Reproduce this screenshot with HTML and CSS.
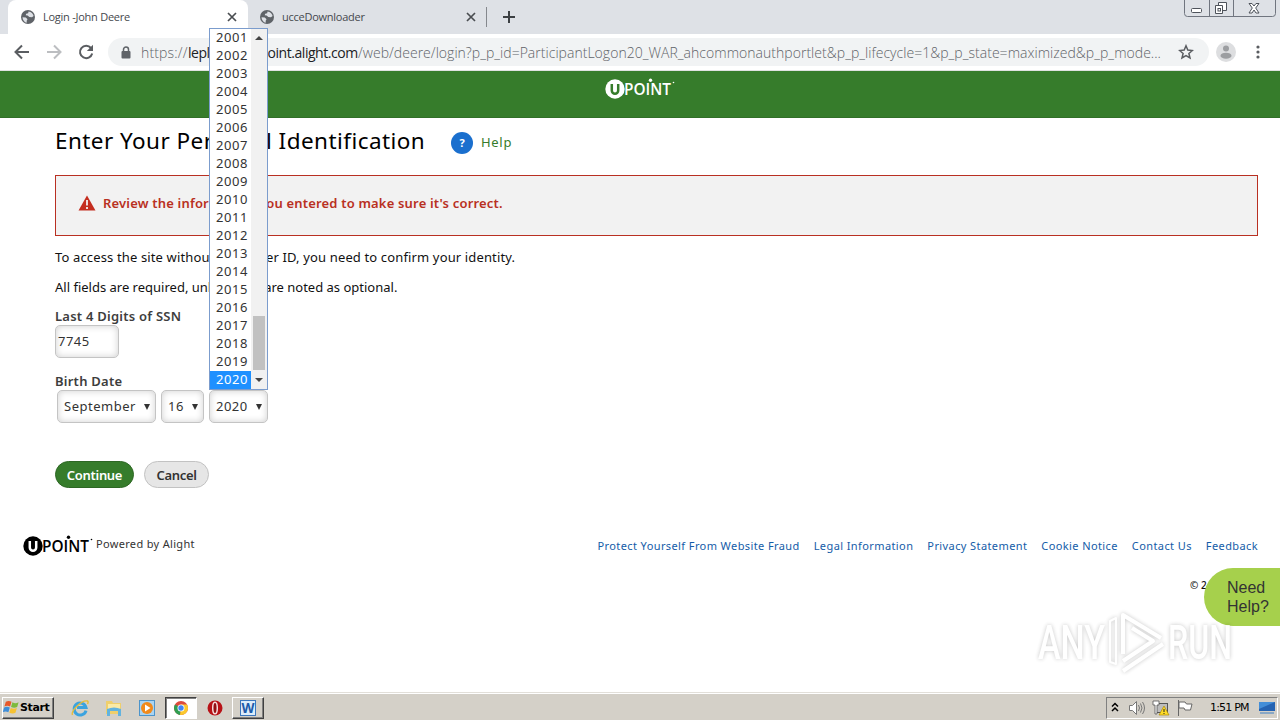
FILE: index.html
```
<!DOCTYPE html>
<html lang="en">
<head>
    <meta charset="UTF-8">
    <meta name="viewport" content="width=device-width, initial-scale=1.0">
    <title>Login -John Deere</title>
    <link rel="stylesheet" href="styles.css">
</head>
<body>

<svg class="defs" width="0" height="0">
    <symbol id="globe" viewBox="0 0 16 16">
        <circle cx="8" cy="8" r="7" fill="#5f6368"/>
        <path d="M2.500 8.200l3.300.3 1.700 1.700-.8 1.500v2.100C4.300 13.300 2.600 10.800 2.500 8.200zM8.500 2.500c2.800.2 4.700 2.200 5.100 4.600l-1.600 1.200-2.700-.4-1.700-1.300-1.900-.3.500-1.500 2-.5z" fill="#dee1e6"/>
    </symbol>
    <symbol id="close" viewBox="0 0 10 10">
        <path d="M1 1l8 8M9 1L1 9" stroke="#4a4d51" stroke-width="1.700"/>
    </symbol>
    <symbol id="upoint" viewBox="0 0 70 22">
        <circle cx="10" cy="11" r="9.700" fill="currentColor"/>
        <path class="upoint-u" d="M6.800 6v6.500a3.200 3.200 0 0 0 6.400 0V6" fill="none" stroke-width="2.500"/>
        <text x="19" y="16.500" font-size="16.500" font-weight="600" textLength="47" lengthAdjust="spacingAndGlyphs" fill="currentColor">POINT</text>
        <circle cx="45.500" cy="2.300" r="1.700" fill="currentColor"/>
        <circle cx="68.500" cy="4.500" r=".8" fill="currentColor"/>
    </symbol>
</svg>

<div class="tabs">
    <div class="tab active">
        <svg class="globe"><use href="#globe"/></svg>
        <span class="tab-title">Login -John Deere</span>
        <svg class="close"><use href="#close"/></svg>
    </div>
    <div class="tab">
        <svg class="globe"><use href="#globe"/></svg>
        <span class="tab-title">ucceDownloader</span>
        <svg class="close"><use href="#close"/></svg>
    </div>
    <svg class="plus" viewBox="0 0 12 12"><path d="M6 0v12M0 6h12" stroke="#3c4043" stroke-width="2"/></svg>
    <svg class="window-btns" viewBox="0 0 94 18" fill="none" stroke="#70757f">
        <path d="M1.500 0v13.500a3 3 0 0 0 3 3h85a3 3 0 0 0 3-3V0M26.500 0v16M50.500 0v16"/>
        <rect x="8.500" y="8.500" width="10" height="4" rx="1" fill="#fff" stroke="#4e535b"/>
        <path d="M35.500 2.500h8v8h-8z" fill="#fff" stroke="#4e535b"/>
        <path d="M32.500 5.500h7v8h-7z" fill="#fff" stroke="#4e535b"/>
        <rect x="35" y="8.500" width="2.500" height="2.500" stroke="#4e535b"/>
        <path d="M66 3.500h3l2 2.500 2-2.500h3l-3.300 4.500 3.300 5h-3l-2-3-2 3h-3l3.300-5z" fill="#fff" stroke="#4e535b"/>
    </svg>
</div>

<div class="toolbar">
    <svg class="nav-icon" viewBox="0 0 16 16"><path d="M15 8H2M8 1.500L1.500 8 8 14.500" fill="none" stroke="#5a5d61" stroke-width="2"/></svg>
    <svg class="nav-icon" viewBox="0 0 16 16"><path d="M1 8h13M8 1.500L14.500 8 8 14.500" fill="none" stroke="#bcbec1" stroke-width="2"/></svg>
    <svg class="nav-icon" viewBox="0 0 16 16"><path d="M13 4a6.200 6.200 0 1 0 1.200 5.500" fill="none" stroke="#5a5d61" stroke-width="2"/><path d="M15 .8v6.200H8.800z" fill="#5a5d61"/></svg>
    <div class="omnibox">
        <svg class="lock" viewBox="0 0 10 13"><path d="M2.500 6V3.500a2.500 2.500 0 0 1 5 0V6" fill="none" stroke="#5f6368" stroke-width="1.500"/><rect x="0.500" y="5" width="9" height="7.500" rx="1" fill="#5f6368"/></svg>
        <div class="url"><span class="url-scheme">https://</span><span class="url-host">leplb0950.upoint.alight.com</span><span class="url-path">/web/deere/login?p_p_id=ParticipantLogon20_WAR_ahcommonauthportlet&amp;p_p_lifecycle=1&amp;p_p_state=maximized&amp;p_p_mode...</span></div>
        <svg class="star" viewBox="0 0 16 16"><path d="M8 1.800l1.800 4.300 4.600.4-3.500 3 1.100 4.500L8 11.600 4 14l1.100-4.500-3.500-3 4.600-.4z" fill="none" stroke="#5a5d61" stroke-width="1.500"/></svg>
    </div>
    <svg class="avatar" viewBox="0 0 20 20"><circle cx="10" cy="10" r="10" fill="#dddee0"/><circle cx="10" cy="6.500" r="3" fill="#9c9ea1"/><ellipse cx="10" cy="13.700" rx="5.500" ry="3" fill="#9c9ea1"/></svg>
    <svg class="dots" viewBox="0 0 4 14" fill="#5a5d61"><circle cx="2" cy="2" r="1.600"/><circle cx="2" cy="7" r="1.600"/><circle cx="2" cy="12" r="1.600"/></svg>
</div>

<main class="page">
    <header class="banner">
        <svg class="upoint-logo light"><use href="#upoint"/></svg>
    </header>

    <div class="content">
        <div class="title-row">
            <h1>Enter Your Personal Identification</h1>
            <span class="help-icon">?</span>
            <a class="help-link">Help</a>
        </div>
        <div class="alert">
            <svg class="warning" viewBox="0 0 18 16"><path d="M9 0.500L17.500 15.500H.5z" fill="#c42e20"/><path d="M9 5v5.500M9 12v2" stroke="#f2f2f2" stroke-width="1.800"/></svg>
            <span class="alert-text">Review the information you entered to make sure it's correct.</span>
        </div>
        <p class="intro">To access the site without your User ID, you need to confirm your identity.</p>
        <p class="required">All fields are required, unless they are noted as optional.</p>

        <label class="ssn-label">Last 4 Digits of SSN</label>
        <div class="field ssn">7745</div>

        <label class="birth-label">Birth Date</label>
        <div class="selects">
            <div class="field month">September<i class="arrow"></i></div>
            <div class="field day">16<i class="arrow"></i></div>
            <div class="field year">2020<i class="arrow"></i></div>
        </div>

        <div class="buttons">
            <button class="btn continue">Continue</button>
            <button class="btn cancel">Cancel</button>
        </div>
    </div>

    <footer class="footer">
        <svg class="upoint-logo dark"><use href="#upoint"/></svg>
        <span class="powered">Powered by Alight</span>
        <nav>
            <a>Protect Yourself From Website Fraud</a>
            <a>Legal Information</a>
            <a>Privacy Statement</a>
            <a>Cookie Notice</a>
            <a>Contact Us</a>
            <a>Feedback</a>
        </nav>
    </footer>
    <div class="copyright">© 2</div>
</main>

<div class="need-help">Need<br>Help?</div>

<svg class="watermark" viewBox="0 0 210 80">
    <g fill="#fff" font-size="48" font-weight="500">
        <text x="8" y="55" textLength="67" lengthAdjust="spacingAndGlyphs">ANY</text>
        <text x="138" y="55" textLength="64" lengthAdjust="spacingAndGlyphs">RUN</text>
    </g>
    <g fill="none" stroke="#fff" stroke-width="4" stroke-linejoin="round">
        <path d="M80 58V17l6-3v46z" stroke-width="2"/>
        <path d="M93 50V11l38 23M133 40L93 67M93 57l30-20-21-13"/>
    </g>
</svg>

<div class="dropdown">
    <ul class="years">
        <li>2001</li>
        <li>2002</li>
        <li>2003</li>
        <li>2004</li>
        <li>2005</li>
        <li>2006</li>
        <li>2007</li>
        <li>2008</li>
        <li>2009</li>
        <li>2010</li>
        <li>2011</li>
        <li>2012</li>
        <li>2013</li>
        <li>2014</li>
        <li>2015</li>
        <li>2016</li>
        <li>2017</li>
        <li>2018</li>
        <li>2019</li>
        <li class="selected">2020</li>
    </ul>
    <div class="scrollbar">
        <i class="scroll-up"></i>
        <div class="thumb"></div>
        <i class="scroll-down"></i>
    </div>
</div>

<div class="taskbar">
    <div class="start">
        <svg viewBox="0 0 18 18"><path d="M3 3q3-2 6 0L7.500 8Q4.500 6.500 1.500 8z" fill="#e8582a"/><path d="M10 3.500q3 2 6.500 0L15 8.500q-3 1.500-6.500 0z" fill="#7dba3c"/><path d="M1.200 9q3-1.500 6 0l-1.500 5q-3-1.700-6 0z" fill="#3f8ed8"/><path d="M8.200 9.500q3 1.500 6.500 0l-1.500 5q-3 1.700-6.500 0z" fill="#f6c232"/></svg>
        <span>Start</span>
    </div>
    <div class="task">
        <svg viewBox="0 0 18 18"><path d="M15 11.500A6 6 0 1 1 15 8.500H6" fill="none" stroke="#3ba3df" stroke-width="3"/><path d="M1.500 16C-.5 12 11 .5 16.500 2c1 .5.500 2 0 3" fill="none" stroke="#e6bd3a" stroke-width="1.400"/></svg>
    </div>
    <div class="task">
        <svg viewBox="0 0 18 18"><path d="M1 2h6l1 2h8v11H1z" fill="#efcf6c"/><path d="M3 5h12v7H3z" fill="#fbeaa6"/><path d="M2 10q7-3 14 0v7h-3v-5H5v5H2z" fill="#62b3df"/></svg>
    </div>
    <div class="task">
        <svg viewBox="0 0 18 18"><rect x="1.500" y="1.500" width="15" height="15" fill="#a9d4f2" stroke="#4c94cb"/><circle cx="9" cy="9" r="6" fill="#f18a1b"/><path d="M7 5.500l5.500 3.500L7 12.500z" fill="#fff"/></svg>
    </div>
    <div class="task pressed">
        <svg viewBox="0 0 18 18"><circle cx="9" cy="9" r="7" fill="#dd4b3e"/><path d="M9 9L3 5.500A7 7 0 0 0 8 16z" fill="#2f9e51"/><path d="M9 9h7a7 7 0 0 1-8 7z" fill="#fbc92d"/><path d="M9 5.500h6a7 7 0 0 1 1 4L12 10z" fill="#fbc92d"/><circle cx="9" cy="9" r="3.500" fill="#fff"/><circle cx="9" cy="9" r="2.700" fill="#4285f4"/></svg>
    </div>
    <div class="task">
        <svg viewBox="0 0 18 18"><circle cx="9" cy="9" r="7.500" fill="#b81217"/><ellipse cx="9" cy="9" rx="2.300" ry="5.800" fill="#941013" stroke="#f7dede" stroke-width="1.500"/></svg>
    </div>
    <div class="task raised">
        <svg viewBox="0 0 18 18"><rect x="1.500" y="1.500" width="15" height="15" fill="#dcecfa" stroke="#3c77bd"/><text x="2.500" y="14" font-size="14" font-weight="bold" fill="#1e5baa" textLength="13" lengthAdjust="spacingAndGlyphs">W</text></svg>
    </div>
    <div class="tray">
        <svg class="chevrons" viewBox="0 0 8 10"><path d="M1 4.500l3-3 3 3M1 9l3-3 3 3" fill="none" stroke="#000" stroke-width="1.500"/></svg>
        <svg class="tray-icon" viewBox="0 0 18 18" fill="none" stroke="#777"><path d="M1.500 6.500h3l4-4v13l-4-4h-3z" fill="#fff"/><path d="M10.500 6q2 3 0 6M12.500 4.500q3 4.500 0 9M14.500 3q4 6 0 12"/></svg>
        <svg class="tray-icon net" viewBox="0 0 18 18"><rect x="4.500" y="4.500" width="11" height="9" fill="#bdbdbd" stroke="#555"/><path d="M1 2h6v4H5v9H3V6H1z" fill="#fff" stroke="#555" stroke-width=".8"/><path d="M12 7l5 9H7z" fill="#ffdc28" stroke="#ad8905" stroke-width=".7"/><path d="M12 10v3M12 14v1" stroke="#222"/></svg>
        <svg class="tray-icon flag" viewBox="0 0 18 18"><path d="M2.500 1v16M3 3h6l1.500 2H16l-1.500 6H9L8 9H3z" fill="#fff" stroke="#666"/></svg>
        <span class="clock">1:51 PM</span>
        <svg class="desktop" viewBox="0 0 16 16"><path d="M0 2h16v9H0z" fill="#2563b2"/><path d="M0 2h16L0 9z" fill="#438ed8"/><path d="M1 13h14" stroke="#88a7c5" stroke-width="2"/></svg>
    </div>
</div>

</body>
</html>
```
FILE: styles.css
```
* {
    margin: 0;
    padding: 0;
    box-sizing: border-box;
}

body {
    width: 1280px;
    height: 720px;
    display: flex;
    flex-direction: column;
    overflow: hidden;
    position: relative;
    background: #fff;
    font-family: "Noto Sans", sans-serif;
    font-size: 13px;
    color: #111;
    white-space: nowrap;
}

svg {
    display: block;
    flex: none;
}

.defs {
    position: absolute;
}

/* browser tabs */
.tabs {
    height: 34px;
    display: flex;
    background: #dee1e6;
    padding-left: 8px;
}

.tab {
    width: 239px;
    height: 34px;
    display: flex;
    align-items: center;
    padding: 0 11px;
    color: #45484d;
    font-family: "Open Sans", sans-serif;
    font-size: 11px;
}

.tab.active {
    width: 240px;
    padding-left: 12px;
    background: #fff;
    border-radius: 8px 8px 0 0;
}

.tab:nth-child(2) {
    background: linear-gradient(#85888d, #85888d) right center / 1px 20px no-repeat;
}

.globe {
    width: 16px;
    height: 16px;
}

.tab-title {
    margin-left: 7px;
    flex: 1;
    line-height: 20px;
    letter-spacing: -0.25px;
}

.close {
    width: 10px;
    height: 10px;
}

.plus {
    width: 12px;
    height: 12px;
    margin: 11px 0 0 16px;
}

.window-btns {
    width: 94px;
    height: 18px;
    margin-left: auto;
    margin-right: 3px;
}

/* address bar */
.toolbar {
    height: 37px;
    display: flex;
    align-items: center;
    padding: 0 20px 0 14px;
    background: #fff;
    border-bottom: 1px solid #dfe2e0;
}

.nav-icon {
    width: 16px;
    height: 16px;
    margin-right: 16px;
}

.omnibox {
    width: 1101px;
    height: 28px;
    margin-left: -2px;
    display: flex;
    align-items: center;
    padding: 0 7px 0 13px;
    border-radius: 14px;
    background: #f1f3f4;
}

.lock {
    width: 10px;
    height: 13px;
}

.url {
    width: 1037px;
    margin-left: 10px;
    font-family: "Open Sans", sans-serif;
    font-size: 14px;
    font-weight: 300;
    color: #5f6368;
}

.url span {
    display: inline-block;
}

.url-scheme {
    width: 47px;
    letter-spacing: 0.15px;
}

.url-host {
    width: 170px;
    color: #202124;
    font-weight: 400;
    letter-spacing: -0.45px;
}

.url-path {
    letter-spacing: 0.03px;
}

.star {
    width: 16px;
    height: 16px;
}

.avatar {
    width: 20px;
    height: 20px;
    margin-left: 7px;
}

.dots {
    width: 4px;
    height: 14px;
    margin-left: auto;
}

/* page */
.page {
    height: 621px;
}

.banner {
    height: 47px;
    padding: 7px 0 0 605px;
    background: #367c2b;
    border-bottom: 1px solid #316f28;
}

.upoint-logo {
    width: 70px;
    height: 22px;
    font-family: "Open Sans", sans-serif;
}

.light {
    color: #fff;
    --u: #367c2b;
}

.dark {
    color: #000;
    --u: #fff;
}

.upoint-u {
    stroke: var(--u);
}

.content {
    padding: 7px 22px 0 55px;
}

.title-row {
    height: 34px;
    display: flex;
    align-items: center;
}

h1 {
    width: 396px;
    margin-top: -3px;
    font-size: 22.5px;
    font-weight: 400;
    line-height: 32px;
    letter-spacing: 0.44px;
    color: #000;
}

.help-icon {
    width: 22px;
    height: 22px;
    border-radius: 50%;
    background: #1a6fce;
    color: #fff;
    font-size: 11px;
    font-weight: 700;
    line-height: 22px;
    text-align: center;
    margin-top: 1px;
}

.help-link {
    margin: -1px 0 0 8px;
    color: #367c2b;
    font-size: 13px;
    letter-spacing: 0.7px;
}

.alert {
    height: 61px;
    margin-top: 16px;
    display: flex;
    align-items: center;
    padding: 0 0 5px 22px;
    background: #f2f2f2;
    border: 1px solid #b93022;
}

.warning {
    width: 18px;
    height: 16px;
}

.alert-text {
    margin: -1px 0 0 7px;
    color: #b93022;
    font-weight: 600;
    letter-spacing: 0.18px;
}

.intro,
.required {
    height: 30px;
    line-height: 30px;
}

.intro {
    margin-top: 6px;
    letter-spacing: 0.14px;
}

label {
    display: block;
    height: 22px;
    line-height: 22px;
    color: #3d3d3d;
    font-weight: 600;
    letter-spacing: 0.24px;
}

.ssn-label {
    margin-top: 3px;
}

.field {
    height: 33px;
    border: 1px solid #c4c4c4;
    border-radius: 5px;
    box-shadow: inset 0 0 7px #cfcfcf;
    line-height: 31px;
    color: #333;
    letter-spacing: 0.5px;
}

.ssn {
    width: 64px;
    margin-top: -2px;
    padding-left: 2px;
}

.birth-label {
    margin-top: 12px;
}

.selects {
    display: flex;
    gap: 5px;
    padding-left: 2px;
    margin-top: -2px;
}

.selects .field {
    display: flex;
    justify-content: space-between;
    align-items: center;
    padding: 0 5px 0 6px;
}

.month {
    width: 99px;
}

.day {
    width: 43px;
}

.year {
    width: 59px;
}

.arrow {
    border: 3px solid transparent;
    border-top: 6px solid #333;
    border-bottom: 0;
}

.buttons {
    display: flex;
    gap: 10px;
    margin-top: 38px;
}

.btn {
    height: 27px;
    border-radius: 14px;
    font-family: "Noto Sans", sans-serif;
    font-size: 13px;
    font-weight: 600;
    line-height: 24px;
    letter-spacing: -0.3px;
}

.continue {
    width: 79px;
    background: #367c2b;
    color: #fff;
    border: 1px solid #2d6724;
}

.cancel {
    width: 65px;
    background: #e6e6e6;
    color: #333;
    border: 1px solid #c2c2c2;
}

.footer {
    display: flex;
    align-items: flex-start;
    margin-top: 47px;
    padding: 0 22px 0 23px;
    height: 36px;
    font-size: 11px;
}

.powered {
    margin-left: 3px;
    margin-top: 1px;
    color: #333;
    letter-spacing: 0.32px;
}

.footer nav {
    margin-left: auto;
    margin-top: 3px;
    display: flex;
    gap: 14px;
    color: #145ca8;
    letter-spacing: 0.4px;
}

.copyright {
    padding: 7px 0 0 1190px;
    font-size: 10px;
    font-weight: 500;
}

.need-help {
    position: absolute;
    left: 1204px;
    top: 568px;
    width: 76px;
    height: 58px;
    padding: 10px 0 0 23px;
    border-radius: 29px 0 0 29px;
    background: #a6d04c;
    color: #333;
    font-family: "Liberation Sans", Arial, sans-serif;
    font-size: 16px;
    line-height: 19px;
}

.watermark {
    position: absolute;
    left: 1030px;
    top: 604px;
    width: 210px;
    height: 80px;
    font-family: Roboto, sans-serif;
    filter: drop-shadow(0 0 2px rgba(0, 0, 0, 0.28));
    opacity: 0.8;
}

/* open year list */
.dropdown {
    position: absolute;
    left: 209px;
    top: 28px;
    width: 59px;
    height: 362px;
    display: flex;
    background: #fff;
    border: 1px solid #7b9ccd;
}

.years {
    width: 41px;
    list-style: none;
}

.years li {
    height: 18px;
    padding-left: 6px;
    line-height: 17px;
    letter-spacing: 0.55px;
    color: #333;
}

.years .selected {
    background: #1e90ff;
    color: #fff;
}

.scrollbar {
    width: 16px;
    display: flex;
    flex-direction: column;
    align-items: center;
    background: #f1f1f1;
}

.scroll-up,
.scroll-down {
    border: 4px solid transparent;
}

.scroll-up {
    margin-top: 7px;
    border-top: 0;
    border-bottom-color: #444;
}

.thumb {
    width: 12px;
    height: 54px;
    margin-top: auto;
    background: #c1c1c1;
}

.scroll-down {
    margin: 8px 0 7px;
    border-bottom: 0;
    border-top-color: #444;
}

/* taskbar */
.taskbar {
    height: 28px;
    display: flex;
    align-items: center;
    padding-top: 2px;
    background: #d4d0c8;
    border-top: 1px solid #e2dfd9;
    box-shadow: inset 0 1px #fff;
}

.start {
    width: 52px;
    height: 22px;
    margin: 0 10px 0 2px;
    display: flex;
    align-items: center;
    border: 1px solid;
    border-color: #fff #404040 #404040 #fff;
    box-shadow: inset -1px -1px #808080;
    color: #000;
    font-family: "DejaVu Sans", sans-serif;
    font-size: 11px;
    font-weight: 700;
    letter-spacing: -0.4px;
}

.start svg {
    width: 17px;
    height: 17px;
}

.task {
    width: 32px;
    height: 22px;
    margin-right: 1.7px;
    display: flex;
    align-items: center;
    justify-content: center;
}

.task svg {
    width: 18px;
    height: 18px;
}

.pressed {
    background: #fff;
    border: 1px solid;
    border-color: #404040 #fff #fff #404040;
    box-shadow: inset 1px 1px #808080;
}

.raised {
    border: 1px solid;
    border-color: #fff #404040 #404040 #fff;
    box-shadow: inset -1px -1px #808080;
}

.tray {
    width: 172px;
    height: 22px;
    margin: 0 2px 0 auto;
    display: flex;
    align-items: center;
    border: 1px solid;
    border-color: #808080 #fff #fff #808080;
}

.chevrons {
    width: 8px;
    height: 10px;
    margin: 0 9px 2px 4px;
}

.tray-icon {
    width: 18px;
    height: 18px;
    margin-right: 6px;
}

.clock {
    margin-left: 10px;
    font-family: "DejaVu Sans", sans-serif;
    font-size: 11px;
    letter-spacing: -0.8px;
    color: #000;
}

.desktop {
    width: 16px;
    height: 16px;
    margin: 0 2px 0 auto;
}
```
